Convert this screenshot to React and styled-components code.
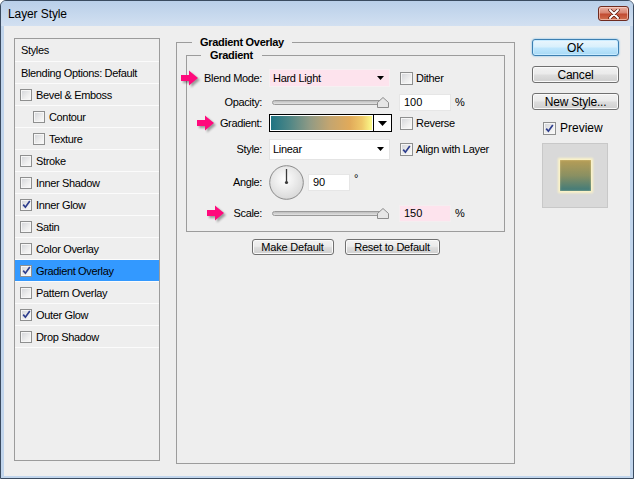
import React from "react";
import styled, { createGlobalStyle, css } from "styled-components";

const GlobalStyle = createGlobalStyle`
  html, body { margin: 0; padding: 0; background: #ffffff; }
  body {
    font-family: "Liberation Sans", Arial, sans-serif;
    font-size: 11px;
    color: #000;
  }
  * { box-sizing: border-box; }
`;

const Window = styled.div`
  width: 634px;
  height: 479px;
  border: 1px solid #3a4b60;
  border-radius: 6px 6px 0 0;
  background: #c1d5ec;
  display: flex;
  flex-direction: column;
  overflow: hidden;
`;

const TitleBar = styled.div`
  flex: none;
  height: 25px;
  display: flex;
  align-items: center;
  justify-content: space-between;
  padding: 0 4px 0 7px;
  background: linear-gradient(#b9cfe9, #d2e0f1);
`;

const Title = styled.span`
  font-size: 12px;
  color: #000;
  letter-spacing: -0.1px;
`;

const CloseButton = styled.div`
  width: 31px;
  height: 15px;
  border: 1px solid #6e2b20;
  border-radius: 3px;
  background: linear-gradient(#eab0a3 0%, #d88572 45%, #c24b32 55%, #d0704f 100%);
  display: flex;
  align-items: center;
  justify-content: center;
  box-shadow: inset 0 0 0 1px rgba(255, 220, 210, 0.6);
`;

const Body = styled.div`
  flex: 1;
  margin: 0 3px 2px;
  background: #eeeeee;
  display: flex;
  align-items: flex-start;
  padding: 10px 0 0 10px;
`;

const StyleList = styled.div`
  margin-top: 2px;
  width: 146px;
  height: 423px;
  border: 1px solid #9b9b9b;
  background: #eeeeee;
  display: flex;
  flex-direction: column;
`;

const ListRow = styled.div`
  height: ${(p) => (p.$first ? 23 : 22)}px;
  display: flex;
  align-items: center;
  gap: 4px;
  padding-left: ${(p) => p.$indent}px;
  border-bottom: 1px solid #fbfbfb;
  background: ${(p) => (p.$selected ? "#3399ff" : "transparent")};
  letter-spacing: -0.35px;
  white-space: nowrap;
`;

const Box = styled.span`
  flex: none;
  width: ${(p) => p.$size}px;
  height: ${(p) => p.$size}px;
  border: 1px solid #8e8f8f;
  background: linear-gradient(135deg, #d2d4d8 0%, #eeeeee 60%, #fbfbfb 100%);
  box-shadow: inset 0 0 0 1px #f6f6f6;
  display: flex;
  align-items: center;
  justify-content: center;
`;

const Group = styled.fieldset`
  margin: 0 0 0 16px;
  padding: 0 9px;
  border: 1px solid #9c9c9c;
  min-width: 0;
  width: 339px;
  height: 428px;
`;

const GroupTitle = styled.legend`
  margin-left: 6px;
  padding: 0 8px;
  font-weight: bold;
  font-size: 11px;
  line-height: 13px;
  letter-spacing: -0.3px;
`;

const SubGroup = styled.fieldset`
  margin: 0;
  padding: 0 0 7px;
  border: 1px solid #9c9c9c;
  min-width: 0;
`;

const SubTitle = styled.legend`
  margin-left: 14px;
  padding: 0 9px;
  font-weight: bold;
  font-size: 11px;
  line-height: 13px;
  letter-spacing: -0.3px;
`;

const Row = styled.div`
  height: ${(p) => p.$h}px;
  display: flex;
  align-items: center;
`;

const Label = styled.div`
  position: relative;
  flex: none;
  width: 75px;
  text-align: right;
  letter-spacing: -0.35px;
  margin-right: 7px;
`;

const ArrowMark = styled.svg`
  position: absolute;
  top: 50%;
  left: ${(p) => p.$x}px;
  margin-top: -8px;
  filter: drop-shadow(2px 2px 1px rgba(0, 0, 0, 0.35));
`;

const Select = styled.div`
  flex: none;
  width: 121px;
  height: ${(p) => p.$h}px;
  display: flex;
  align-items: center;
  justify-content: space-between;
  padding: 0 5px 0 3px;
  background: ${(p) => (p.$pink ? "#fde3ed" : "#ffffff")};
  border: 1px solid ${(p) => (p.$pink ? "#f6f0f2" : "#e4e4e4")};
  letter-spacing: -0.3px;
`;

const SliderWrap = styled.div`
  position: relative;
  flex: none;
  width: 121px;
  height: 12px;
  display: flex;
  align-items: center;
  padding: 0 3px 0 3px;
`;

const Track = styled.div`
  width: 112px;
  height: 5px;
  border: 1px solid #9a9a9a;
  border-radius: 3px;
  background: linear-gradient(#bdbdbd, #e3e3e3);
`;

const Thumb = styled.svg`
  position: absolute;
  left: 108px;
  top: 1px;
`;

const NumField = styled.div`
  flex: none;
  width: ${(p) => p.$w}px;
  height: 17px;
  margin-left: ${(p) => p.$ml}px;
  padding-left: 4px;
  display: flex;
  align-items: center;
  background: ${(p) => (p.$pink ? "#fde3ed" : "#ffffff")};
  border: 1px solid ${(p) => (p.$pink ? "#f4eef0" : "#e6e6e6")};
`;

const Unit = styled.span`
  margin-left: 4px;
  ${(p) =>
    p.$raised &&
    css`
      margin-bottom: 8px;
    `}
`;

const Option = styled.div`
  display: flex;
  align-items: center;
  gap: 3px;
  margin-left: ${(p) => p.$ml}px;
  letter-spacing: -0.3px;
  white-space: nowrap;
`;

const GradientPicker = styled.div`
  flex: none;
  width: 123px;
  height: 18px;
  border: 1px solid #000;
  display: flex;
  background: #fff;
`;

const GradientSwatch = styled.div`
  flex: 1;
  margin: 1px;
  background: linear-gradient(
    90deg,
    #1f7483 0%,
    #4e8686 18%,
    #8f9a85 38%,
    #c3a570 58%,
    #e1aa5a 78%,
    #efc868 90%,
    #fbfb8a 100%
  );
`;

const PickerButton = styled.div`
  flex: none;
  width: 18px;
  border-left: 1px solid #000;
  display: flex;
  align-items: center;
  justify-content: center;
`;

const DialSvg = styled.svg`
  flex: none;
`;

const ButtonRow = styled.div`
  margin-top: 7px;
  display: flex;
  justify-content: center;
  gap: 11px;
`;

const PSButton = styled.div`
  width: ${(p) => p.$w}px;
  height: ${(p) => p.$h}px;
  display: flex;
  align-items: center;
  justify-content: center;
  border: 1px solid ${(p) => (p.$primary ? "#3c7fb1" : "#707070")};
  border-radius: 3px;
  font-size: ${(p) => p.$fs}px;
  letter-spacing: -0.2px;
  background: ${(p) =>
    p.$primary
      ? "linear-gradient(#eaf6fd 0%, #d9f0fc 45%, #bee6fd 55%, #a7d9f5 100%)"
      : "linear-gradient(#f2f2f2 0%, #ebebeb 45%, #dddddd 55%, #cfcfcf 100%)"};
  box-shadow: ${(p) =>
    p.$primary
      ? "inset 0 0 0 1px #c8ebff, 0 0 2px #5fb2e6"
      : "inset 0 0 0 1px #fafafa"};
`;

const RightColumn = styled.div`
  margin: 3px 0 0 17px;
  width: 87px;
  display: flex;
  flex-direction: column;
  gap: 10px;
`;

const PreviewToggle = styled.div`
  display: flex;
  align-items: center;
  gap: 4px;
  padding-left: 11px;
  font-size: 12px;
  margin-top: 1px;
`;

const PreviewBox = styled.div`
  margin: -2px 0 0 10px;
  width: 66px;
  height: 65px;
  border: 1px solid #c8c8c8;
  background: #d9d9d9;
  display: flex;
  align-items: center;
  justify-content: center;
`;

const PreviewSquare = styled.div`
  width: 31px;
  height: 31px;
  background: linear-gradient(#b69d56 0%, #8a9062 50%, #3e7a7a 100%);
  box-shadow: 0 0 2px 2px #fbf3c8, inset 0 0 2px rgba(255, 240, 180, 0.6);
`;

const Check = () => (
  <svg width="9" height="9" viewBox="0 0 9 9">
    <path d="M1.2 4.6 L3.4 7.2 L7.8 1" fill="none" stroke="#2f3f8e" strokeWidth="1.7" />
  </svg>
);

const CheckBox = ({ checked, size = 13 }) => (
  <Box $size={size}>{checked && <Check />}</Box>
);

const DownTri = ({ w = 7, h = 4 }) => (
  <svg width={w} height={h} viewBox={`0 0 ${w} ${h}`}>
    <polygon points={`0,0 ${w},0 ${w / 2},${h}`} fill="#000" />
  </svg>
);

const PinkArrow = ({ x }) => (
  <ArrowMark $x={x} width="18" height="16" viewBox="0 0 18 16">
    <path d="M0 5 L8 5 L8 0.5 Q12 4 17 8 Q12 12 8 15.5 L8 11 L0 11 Z" fill="#ff0a7c" />
  </ArrowMark>
);

const Slider = () => (
  <SliderWrap>
    <Track />
    <Thumb width="12" height="11" viewBox="0 0 12 11">
      <path d="M0.5 10.5 L0.5 5.5 L6 0.5 L11.5 5.5 L11.5 10.5 Z" fill="#e6e6e6" stroke="#8c8c8c" />
    </Thumb>
  </SliderWrap>
);

const Dial = () => (
  <DialSvg width="35" height="35" viewBox="0 0 35 35">
    <defs>
      <radialGradient id="dialg" cx="45%" cy="40%" r="65%">
        <stop offset="0%" stopColor="#ffffff" />
        <stop offset="100%" stopColor="#d6d6d6" />
      </radialGradient>
    </defs>
    <circle cx="17.5" cy="17.5" r="16.8" fill="url(#dialg)" stroke="#8a8a8a" />
    <line x1="17.5" y1="17.5" x2="17.5" y2="4" stroke="#3a3a3a" strokeWidth="1.3" />
    <circle cx="17.5" cy="17.5" r="1.6" fill="#3a3a3a" />
  </DialSvg>
);

const styleItems = [
  { label: "Blending Options: Default", plain: true },
  { label: "Bevel & Emboss" },
  { label: "Contour", indent: true },
  { label: "Texture", indent: true },
  { label: "Stroke" },
  { label: "Inner Shadow" },
  { label: "Inner Glow", checked: true },
  { label: "Satin" },
  { label: "Color Overlay" },
  { label: "Gradient Overlay", checked: true, selected: true },
  { label: "Pattern Overlay" },
  { label: "Outer Glow", checked: true },
  { label: "Drop Shadow" },
];

export default function App() {
  return (
    <>
      <GlobalStyle />
      <Window>
        <TitleBar>
          <Title>Layer Style</Title>
          <CloseButton>
            <svg width="12" height="10" viewBox="0 0 12 10">
              <path d="M2 1 L10 9 M10 1 L2 9" stroke="#5a1a10" strokeWidth="3.4" strokeLinecap="round" />
              <path d="M2 1 L10 9 M10 1 L2 9" stroke="#ffffff" strokeWidth="1.9" strokeLinecap="round" />
            </svg>
          </CloseButton>
        </TitleBar>
        <Body>
          <StyleList>
            <ListRow $first $indent={6}>Styles</ListRow>
            {styleItems.map((it) => (
              <ListRow
                key={it.label}
                $indent={it.plain ? 6 : it.indent ? 18 : 5}
                $selected={it.selected}
              >
                {!it.plain && <CheckBox size={12} checked={it.checked} />}
                {it.label}
              </ListRow>
            ))}
          </StyleList>

          <Group>
            <GroupTitle>Gradient Overlay</GroupTitle>
            <SubGroup>
              <SubTitle>Gradient</SubTitle>
              <Row $h={32}>
                <Label>
                  <PinkArrow x={-6} />
                  Blend Mode:
                </Label>
                <Select $pink $h={18}>
                  <span>Hard Light</span>
                  <DownTri />
                </Select>
                <Option $ml={10}>
                  <CheckBox />
                  Dither
                </Option>
              </Row>
              <Row $h={16}>
                <Label>Opacity:</Label>
                <Slider />
                <NumField $w={52} $ml={9}>100</NumField>
                <Unit>%</Unit>
              </Row>
              <Row $h={26}>
                <Label>
                  <PinkArrow x={10} />
                  Gradient:
                </Label>
                <GradientPicker>
                  <GradientSwatch />
                  <PickerButton>
                    <DownTri w={9} h={5} />
                  </PickerButton>
                </GradientPicker>
                <Option $ml={8}>
                  <CheckBox />
                  Reverse
                </Option>
              </Row>
              <Row $h={26}>
                <Label>Style:</Label>
                <Select $h={21}>
                  <span>Linear</span>
                  <DownTri />
                </Select>
                <Option $ml={10}>
                  <CheckBox checked />
                  Align with Layer
                </Option>
              </Row>
              <Row $h={40}>
                <Label>Angle:</Label>
                <Dial />
                <NumField $w={42} $ml={4}>90</NumField>
                <Unit $raised>°</Unit>
              </Row>
              <Row $h={22}>
                <Label>
                  <PinkArrow x={20} />
                  Scale:
                </Label>
                <Slider />
                <NumField $w={52} $ml={9} $pink>150</NumField>
                <Unit>%</Unit>
              </Row>
            </SubGroup>
            <ButtonRow>
              <PSButton $w={82} $h={16} $fs={11}>Make Default</PSButton>
              <PSButton $w={95} $h={16} $fs={11}>Reset to Default</PSButton>
            </ButtonRow>
          </Group>

          <RightColumn>
            <PSButton $primary $w={87} $h={17} $fs={12}>OK</PSButton>
            <PSButton $w={87} $h={17} $fs={12}>Cancel</PSButton>
            <PSButton $w={87} $h={17} $fs={12}>New Style...</PSButton>
            <PreviewToggle>
              <CheckBox checked />
              Preview
            </PreviewToggle>
            <PreviewBox>
              <PreviewSquare />
            </PreviewBox>
          </RightColumn>
        </Body>
      </Window>
    </>
  );
}
